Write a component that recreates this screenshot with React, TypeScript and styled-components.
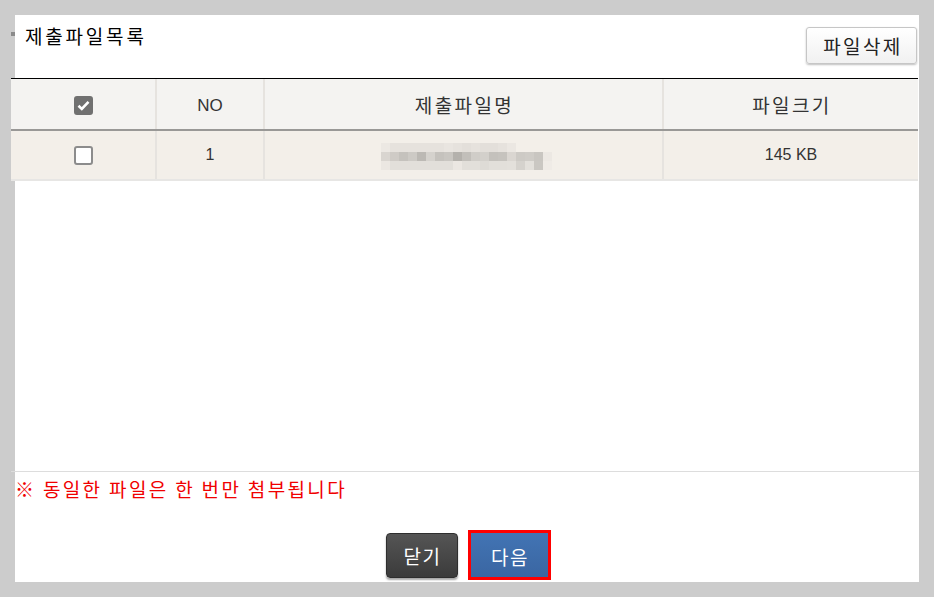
import React from "react";
import styled, { createGlobalStyle } from "styled-components";

const GlobalStyle = createGlobalStyle`
  html, body { margin: 0; padding: 0; background: #cccccc; }
  body {
    font-family: "Liberation Sans", "Noto Sans CJK KR", sans-serif;
    color: #333;
  }
  * { box-sizing: border-box; }
`;

const Page = styled.div`
  padding: 15px;
  width: 934px;
  height: 597px;
`;

const Panel = styled.div`
  width: 904px;
  height: 567px;
  background: #ffffff;
  display: flex;
  flex-direction: column;
`;

const Inner = styled.div`
  margin-left: -4px;
  width: 907px;
  display: flex;
  flex-direction: column;
  flex: 1;
`;

const TitleBar = styled.div`
  height: 63px;
  display: flex;
  justify-content: space-between;
  align-items: flex-start;
`;

const Title = styled.h2`
  margin: 0;
  padding-top: 10px;
  display: flex;
  align-items: flex-start;
  font-size: 19px;
  line-height: 22px;
  font-weight: 400;
  color: #000;
  letter-spacing: 2.8px;
  font-family: "Noto Sans CJK KR", sans-serif;
  &::before {
    content: "";
    width: 4px;
    height: 4px;
    margin-top: 7px;
    margin-right: 10px;
    background: #8a8a8a;
  }
`;

const DeleteButton = styled.button`
  margin-top: 12px;
  margin-right: 1px;
  width: 111px;
  height: 37px;
  border: 1px solid #c6c6c6;
  border-radius: 3px;
  background: linear-gradient(#ffffff, #f1f1f1);
  box-shadow: 0 1px 2px rgba(0, 0, 0, 0.25);
  font-family: "Noto Sans CJK KR", sans-serif;
  font-size: 19px;
  letter-spacing: 2.4px;
  color: #222;
  padding: 0 0 0 3px;
`;

const Table = styled.div`
  border-top: 1px solid #000;
`;

const Row = styled.div<{ $head?: boolean }>`
  display: grid;
  grid-template-columns: 144px 108px 399px 256px;
  height: ${(p) => (p.$head ? 52 : 50)}px;
  background: ${(p) => (p.$head ? "#f4f3f1" : "#f3efe9")};
  border-bottom: 2px solid ${(p) => (p.$head ? "#999896" : "#e7e6e4")};
`;

const Cell = styled.div<{ $head?: boolean; $hangul?: boolean }>`
  display: flex;
  align-items: center;
  justify-content: center;
  font-family: ${(p) =>
    p.$hangul ? '"Noto Sans CJK KR", sans-serif' : '"Liberation Sans", "Noto Sans CJK KR", sans-serif'};
  font-size: ${(p) => (p.$hangul ? 19 : p.$head ? 17 : 16)}px;
  letter-spacing: ${(p) => (p.$hangul ? "2.4px" : "0")};
  padding-left: ${(p) => (p.$hangul ? "2px" : "0")};
  padding-top: ${(p) => (p.$head && !p.$hangul ? "3px" : "0")};
  color: #333;
  & + & {
    border-left: 2px solid ${(p) => (p.$head ? "#e8e6e3" : "#e6e3df")};
  }
`;

const Box = styled.span<{ $checked?: boolean }>`
  width: 19px;
  height: 19px;
  border-radius: 3px;
  display: inline-flex;
  align-items: center;
  justify-content: center;
  background: ${(p) => (p.$checked ? "#707070" : "#ffffff")};
  border: 2px solid ${(p) => (p.$checked ? "#707070" : "#8c8c8c")};
`;

const Spacer = styled.div`
  flex: 1;
`;

const Footer = styled.div`
  width: 908px;
  border-top: 1px solid #dddddd;
  height: 111px;
  display: flex;
  flex-direction: column;
`;

const Notice = styled.p`
  margin: 7px 0 0 4px;
  font-family: "Noto Sans CJK KR", sans-serif;
  font-size: 19px;
  line-height: 20px;
  letter-spacing: 2.35px;
  color: #f00000;
`;

const ButtonRow = styled.div`
  margin-top: 31px;
  margin-left: 6px;
  display: flex;
  justify-content: center;
  align-items: center;
  gap: 10px;
`;

const ActionButton = styled.button<{ $primary?: boolean }>`
  height: ${(p) => (p.$primary ? 50 : 45)}px;
  width: ${(p) => (p.$primary ? 83 : 72)}px;
  border-radius: ${(p) => (p.$primary ? 0 : 4)}px;
  border: ${(p) => (p.$primary ? "3px solid #ff0000" : "1px solid #2e2e2e")};
  background: ${(p) =>
    p.$primary
      ? "linear-gradient(#4274b4, #3a66a2)"
      : "linear-gradient(#555555, #3b3b3b)"};
  box-shadow: ${(p) => (p.$primary ? "none" : "0 2px 2px rgba(0,0,0,0.35)")};
  color: #fff;
  font-family: "Noto Sans CJK KR", sans-serif;
  font-size: 19px;
  letter-spacing: 1.6px;
  padding: ${(p) => (p.$primary ? "3px 0 0 2px" : "0 0 0 2px")};
`;

const Check = () => (
  <svg width="13" height="11" viewBox="0 0 13 11">
    <path d="M1.5 5.8 L4.8 9 L11.5 1.8" fill="none" stroke="#fff" strokeWidth="2.6" />
  </svg>
);

const mosaic: string[][] = [
  ["#ece8e3", "#e6e2dd", "#e6e2dd", "#e6e2dd", "#e6e2dd", "#e6e2dd", "#e6e2dd", "#e9e5e0", "#e6e2dd", "#e3dfda", "#e6e2dd", "#e3dfda", "#e3dfda", "#e6e2dd", "#ebe7e2", ""],
  ["#d9d5d0", "#cfcbc6", "#c5c2bd", "#cdcac5", "#bcb9b4", "#d5d2cd", "#c5c2bd", "#c9c6c1", "#b4b1ac", "#c2bfba", "#d0cdc8", "#d3d0cb", "#c4c1bc", "#c6c3be", "#dad6d1", "#cdcac5", "#cfccc7", "#c9c6c1", "#ece8e3"],
  ["#ebe7e2", "#e2dfda", "#e2dfda", "#e2dfda", "#e2dfda", "#e2dfda", "#e2dfda", "#e2dfda", "#ebe7e2", "#e2dfda", "#e2dfda", "#dedbd6", "#e2dfda", "#e2dfda", "#e3e0db", "#d5d2cd", "#e3e0db", "#cac7c2", "#efebe6"],
];

const Mosaic = () => (
  <svg width="171" height="27" viewBox="0 0 171 27">
    {mosaic.map((row, r) =>
      row.map((c, i) =>
        c ? <rect key={`${r}-${i}`} x={i * 9} y={r * 9} width="9" height="9" fill={c} /> : null
      )
    )}
  </svg>
);

const MosaicWrap = styled.span`
  display: inline-flex;
  margin-left: 6px;
  margin-top: 3px;
`;

export default function App() {
  return (
    <>
      <GlobalStyle />
      <Page>
        <Panel>
          <Inner>
            <TitleBar>
              <Title>제출파일목록</Title>
              <DeleteButton>파일삭제</DeleteButton>
            </TitleBar>
            <Table>
              <Row $head>
                <Cell $head>
                  <Box $checked>
                    <Check />
                  </Box>
                </Cell>
                <Cell $head>NO</Cell>
                <Cell $head $hangul>제출파일명</Cell>
                <Cell $head $hangul>파일크기</Cell>
              </Row>
              <Row>
                <Cell>
                  <Box />
                </Cell>
                <Cell>1</Cell>
                <Cell>
                  <MosaicWrap>
                    <Mosaic />
                  </MosaicWrap>
                </Cell>
                <Cell>145 KB</Cell>
              </Row>
            </Table>
            <Spacer />
            <Footer>
              <Notice>※ 동일한 파일은 한 번만 첨부됩니다</Notice>
              <ButtonRow>
                <ActionButton>닫기</ActionButton>
                <ActionButton $primary>다음</ActionButton>
              </ButtonRow>
            </Footer>
          </Inner>
        </Panel>
      </Page>
    </>
  );
}
